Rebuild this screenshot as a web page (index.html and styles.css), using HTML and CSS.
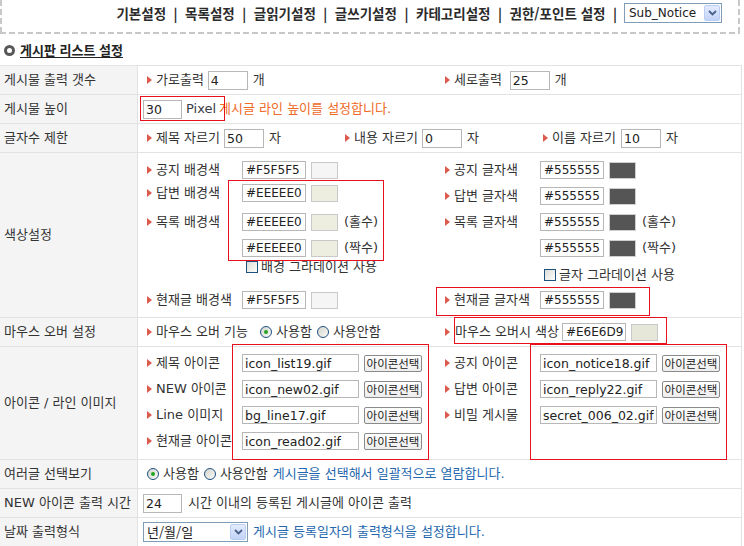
FILE: index.html
```html
<!DOCTYPE html>
<html lang="ko">
<head>
<meta charset="utf-8">
<title>게시판 리스트 설정</title>
<link rel="stylesheet" href="styles.css">
</head>
<body>
<div class="topbar">
  <nav class="menu">
    <span>기본설정</span><span class="sep">|</span><span>목록설정</span><span class="sep">|</span><span>글읽기설정</span><span class="sep">|</span><span>글쓰기설정</span><span class="sep">|</span><span>카테고리설정</span><span class="sep">|</span><span>권한/포인트 설정</span><span class="sep last">|</span>
  </nav>
  <div class="select sel-sub"><span class="sel-text">Sub_Notice</span><span class="sel-btn"><svg width="9" height="6" viewBox="0 0 9 6"><path d="M1 1 L4.5 4.5 L8 1" fill="none" stroke="#4a5f8a" stroke-width="1.8"/></svg></span></div>
</div>

<h2 class="title"><span class="ring"></span><span class="title-text">게시판 리스트 설정</span></h2>

<div class="form">
  <div class="row">
    <div class="th">게시물 출력 갯수</div>
    <div class="td cols2">
      <div class="item"><i class="arr"></i><span>가로출력</span><input class="inp w40 ml4" type="text" value="4"><span class="unit">개</span></div>
      <div class="item"><i class="arr"></i><span>세로출력</span><input class="inp w40 ml8" type="text" value="25"><span class="unit">개</span></div>
    </div>
  </div>

  <div class="row">
    <div class="th">게시물 높이</div>
    <div class="td">
      <input class="inp w39" type="text" value="30"><span class="pixel">Pixel</span><span class="orange">게시글 라인 높이를 설정합니다.</span>
    </div>
  </div>

  <div class="row">
    <div class="th">글자수 제한</div>
    <div class="td cols3">
      <div class="item"><i class="arr"></i><span>제목 자르기</span><input class="inp w40 ml4" type="text" value="50"><span class="unit">자</span></div>
      <div class="item"><i class="arr"></i><span>내용 자르기</span><input class="inp w40 ml4" type="text" value="0"><span class="unit">자</span></div>
      <div class="item"><i class="arr"></i><span>이름 자르기</span><input class="inp w40 ml5" type="text" value="10"><span class="unit">자</span></div>
    </div>
  </div>

  <div class="row row-color">
    <div class="th">색상설정</div>
    <div class="td cols2 top">
      <div class="ccol">
        <div class="cline"><span class="lab"><i class="arr"></i>공지 배경색</span><input class="inp hex" type="text" value="#F5F5F5"><span class="sw sw-f5"></span></div>
        <div class="cline mt5"><span class="lab"><i class="arr"></i>답변 배경색</span><input class="inp hex" type="text" value="#EEEEE0"><span class="sw sw-ee"></span></div>
        <div class="cline mt11"><span class="lab"><i class="arr"></i>목록 배경색</span><input class="inp hex" type="text" value="#EEEEE0"><span class="sw sw-ee"></span><span class="note">(홀수)</span></div>
        <div class="cline mt8"><span class="lab"></span><input class="inp hex" type="text" value="#EEEEE0"><span class="sw sw-ee"></span><span class="note">(짝수)</span></div>
        <div class="cline mt1"><span class="lab"></span><span class="chk"></span><span>배경 그라데이션 사용</span></div>
        <div class="cline mt15"><span class="lab"><i class="arr"></i>현재글 배경색</span><input class="inp hex" type="text" value="#F5F5F5"><span class="sw sw-f5"></span></div>
      </div>
      <div class="ccol">
        <div class="cline"><span class="lab"><i class="arr"></i>공지 글자색</span><input class="inp hex" type="text" value="#555555"><span class="sw sw-55"></span></div>
        <div class="cline mt8"><span class="lab"><i class="arr"></i>답변 글자색</span><input class="inp hex" type="text" value="#555555"><span class="sw sw-55"></span></div>
        <div class="cline mt8"><span class="lab"><i class="arr"></i>목록 글자색</span><input class="inp hex" type="text" value="#555555"><span class="sw sw-55"></span><span class="note">(홀수)</span></div>
        <div class="cline mt8"><span class="lab"></span><input class="inp hex" type="text" value="#555555"><span class="sw sw-55"></span><span class="note">(짝수)</span></div>
        <div class="cline mt9"><span class="lab"></span><span class="chk"></span><span>글자 그라데이션 사용</span></div>
        <div class="cline mt7"><span class="lab"><i class="arr"></i>현재글 글자색</span><input class="inp hex" type="text" value="#555555"><span class="sw sw-55"></span></div>
      </div>
    </div>
  </div>

  <div class="row">
    <div class="th">마우스 오버 설정</div>
    <div class="td cols2">
      <div class="item"><i class="arr"></i><span>마우스 오버 기능</span><span class="radio on ml12"></span><span class="rlabel">사용함</span><span class="radio ml5"></span><span class="rlabel">사용안함</span></div>
      <div class="item"><i class="arr"></i><span class="ml1">마우스 오버시 색상</span><input class="inp hex ml3" type="text" value="#E6E6D9"><span class="sw sw-e6"></span></div>
    </div>
  </div>

  <div class="row row-icon">
    <div class="th">아이콘 / 라인 이미지</div>
    <div class="td cols2 top">
      <div class="icol">
        <div class="iline"><span class="lab"><i class="arr"></i>제목 아이콘</span><input class="inp file" type="text" value="icon_list19.gif"><button class="btn" type="button">아이콘선택</button></div>
        <div class="iline"><span class="lab"><i class="arr"></i>NEW 아이콘</span><input class="inp file" type="text" value="icon_new02.gif"><button class="btn" type="button">아이콘선택</button></div>
        <div class="iline"><span class="lab"><i class="arr"></i>Line 이미지</span><input class="inp file" type="text" value="bg_line17.gif"><button class="btn" type="button">아이콘선택</button></div>
        <div class="iline"><span class="lab"><i class="arr"></i>현재글 아이콘</span><input class="inp file" type="text" value="icon_read02.gif"><button class="btn" type="button">아이콘선택</button></div>
      </div>
      <div class="icol">
        <div class="iline"><span class="lab"><i class="arr"></i>공지 아이콘</span><input class="inp file" type="text" value="icon_notice18.gif"><button class="btn" type="button">아이콘선택</button></div>
        <div class="iline"><span class="lab"><i class="arr"></i>답변 아이콘</span><input class="inp file" type="text" value="icon_reply22.gif"><button class="btn" type="button">아이콘선택</button></div>
        <div class="iline"><span class="lab"><i class="arr"></i>비밀 게시물</span><input class="inp file" type="text" value="secret_006_02.gif"><button class="btn" type="button">아이콘선택</button></div>
      </div>
    </div>
  </div>

  <div class="row">
    <div class="th">여러글 선택보기</div>
    <div class="td">
      <span class="radio on ml4"></span><span class="rlabel">사용함</span><span class="radio ml5"></span><span class="rlabel">사용안함</span><span class="blue ml5">게시글을 선택해서 일괄적으로 열람합니다.</span>
    </div>
  </div>

  <div class="row">
    <div class="th">NEW 아이콘 출력 시간</div>
    <div class="td">
      <input class="inp w39" type="text" value="24"><span class="ml6">시간 이내의 등록된 게시글에 아이콘 출력</span>
    </div>
  </div>

  <div class="row">
    <div class="th">날짜 출력형식</div>
    <div class="td">
      <div class="select sel-date"><span class="sel-text kr">년/월/일</span><span class="sel-btn"><svg width="9" height="6" viewBox="0 0 9 6"><path d="M1 1 L4.5 4.5 L8 1" fill="none" stroke="#4a5f8a" stroke-width="1.8"/></svg></span></div>
      <span class="blue ml5">게시글 등록일자의 출력형식을 설정합니다.</span>
    </div>
  </div>
</div>

<div class="mark mk-height"></div>
<div class="mark mk-bg"></div>
<div class="mark mk-cur"></div>
<div class="mark mk-over"></div>
<div class="mark mk-icon-l"></div>
<div class="mark mk-icon-r"></div>
</body>
</html>
```

FILE: styles.css
```css
* { box-sizing: border-box; }

body {
  margin: 0;
  position: relative;
  background: #fff;
  font-family: "DejaVu Sans", "Noto Sans CJK KR", sans-serif;
  font-size: 13px;
  line-height: 18px;
  color: #333;
}

/* ---------- top menu ---------- */
.topbar {
  width: 740px;
  height: 34px;
  display: flex;
  justify-content: flex-end;
  align-items: center;
  padding: 0 18px 8px 0;
  background:
    repeating-linear-gradient(90deg, #c8c8c8 0 6px, transparent 6px 9px) left bottom / 100% 2px no-repeat,
    repeating-linear-gradient(180deg, #c8c8c8 0 6px, transparent 6px 9px) right top / 2px 100% no-repeat,
    repeating-linear-gradient(180deg, #c8c8c8 0 6px, transparent 6px 9px) left top / 2px 100% no-repeat;
}

.menu {
  display: flex;
  align-items: center;
  font-family: "Noto Sans CJK KR", sans-serif;
  font-weight: bold;
  font-size: 13.5px;
  color: #2b2b2b;
  white-space: pre;
}
.menu .sep { margin: 0 7.5px; color: #2b2b2b; }
.menu .sep.last { margin-right: 7px; }

.select {
  display: flex;
  align-items: center;
  height: 20px;
  border: 1px solid #7f9db9;
  background: #fff;
  padding: 0 1px 0 0;
}
.sel-sub { width: 98px; }
.sel-date { width: 105px; }
.sel-text {
  flex: 1;
  padding-left: 4px;
  font-family: "DejaVu Sans", sans-serif;
  font-size: 12px;
  color: #222;
  white-space: nowrap;
}
.sel-text.kr { font-family: "Noto Sans CJK KR", sans-serif; font-size: 13px; padding-left: 3px; }
.sel-btn {
  width: 16px;
  height: 16px;
  display: flex;
  align-items: center;
  justify-content: center;
  border: 1px solid #bccdf3;
  border-radius: 2px;
  background: linear-gradient(#e3ebfd, #c2d3f8);
}

/* ---------- title ---------- */
.title {
  margin: 7px 0 6px 0;
  padding-left: 4px;
  height: 18px;
  display: flex;
  align-items: center;
  font-size: 13px;
  font-weight: bold;
  line-height: 18px;
  color: #222;
}
.ring {
  width: 11px;
  height: 11px;
  border: 3px solid #585858;
  border-radius: 50%;
  margin-right: 5px;
}
.title-text {
  font-family: "Noto Sans CJK KR", sans-serif;
  text-decoration: underline;
  text-underline-offset: 2px;
}

/* ---------- form grid ---------- */
.form {
  width: 742px;
  border-top: 1px solid #e2e2e2;
  border-right: 1px solid #e2e2e2;
}
.row {
  display: grid;
  grid-template-columns: 138px 1fr;
  height: 29px;
  border-bottom: 1px solid #e2e2e2;
}
.row-color { height: 165px; }
.row-icon { height: 113px; }

.th {
  display: flex;
  align-items: center;
  padding-left: 4px;
  background: #f4f4f4;
  border-right: 1px solid #e2e2e2;
  color: #333;
  white-space: nowrap;
}
.td {
  display: flex;
  align-items: center;
  padding-left: 5px;
  white-space: nowrap;
}
.td.cols2 { display: grid; grid-template-columns: 298px 1fr; align-items: center; }
.td.cols3 { display: grid; grid-template-columns: 198px 198px 1fr; align-items: center; }
.td.top { align-items: start; }

.item { display: flex; align-items: center; }

.arr {
  display: inline-block;
  width: 0;
  height: 0;
  border-left: 5px solid #dc5a4e;
  border-top: 4px solid transparent;
  border-bottom: 4px solid transparent;
  margin: 0 4px 0 4px;
  flex: none;
}

/* ---------- inputs ---------- */
.inp {
  height: 19px;
  margin: 0;
  padding: 0 2px;
  border: 1px solid #b7b7b7;
  background: #fff;
  font-family: "DejaVu Sans", sans-serif;
  font-size: 12.5px;
  color: #222;
  outline: none;
}
.w40 { width: 40px; }
.w39 { width: 39px; }
.hex { width: 64px; height: 18px; padding: 0 1px 0 3px; font-size: 12px; }
.file { width: 117px; height: 18px; }

.unit { margin-left: 5px; }
.pixel { margin-left: 4px; color: #3a3a48; }
.orange { margin-left: 3px; color: #ef6a25; }
.blue { color: #2467ae; }
.note { margin-left: 6px; }

.ml1 { margin-left: 1px; }
.ml3 { margin-left: 3px; }
.ml4 { margin-left: 4px; }
.ml5 { margin-left: 5px; }
.ml6 { margin-left: 6px; }
.ml8 { margin-left: 8px; }
.ml12 { margin-left: 12px; }

/* ---------- colour rows ---------- */
.ccol { display: flex; flex-direction: column; padding-top: 8px; }
.cline { display: flex; align-items: center; height: 18px; }
.mt1 { margin-top: 1px; }
.mt5 { margin-top: 5px; }
.mt7 { margin-top: 7px; }
.mt8 { margin-top: 8px; }
.mt9 { margin-top: 9px; }
.mt11 { margin-top: 11px; }
.mt15 { margin-top: 15px; }

.lab { display: flex; align-items: center; width: 99px; flex: none; }
.sw {
  width: 27px;
  height: 17px;
  margin-left: 5px;
  border: 1px solid #c9c9c9;
}
.sw-f5 { background: #f5f5f5; }
.sw-ee { background: #eeeee0; }
.sw-55 { background: #555555; border-color: #cfcfcf; }
.sw-e6 { background: #e6e6d9; }

.chk {
  width: 12px;
  height: 12px;
  margin: 0 3px 0 4px;
  border: 1px solid #1c5180;
  background: linear-gradient(135deg, #dcdcd7, #fdfdfb);
}

/* ---------- radios ---------- */
.radio {
  position: relative;
  width: 12px;
  height: 12px;
  flex: none;
  border: 1px solid #1c5180;
  border-radius: 50%;
  background: linear-gradient(135deg, #d4d4cc, #fbfbf8);
}
.radio.on::after {
  content: "";
  position: absolute;
  left: 3px;
  top: 3px;
  width: 4px;
  height: 4px;
  border-radius: 50%;
  background: #23a523;
}
.rlabel { margin-left: 4px; }

/* ---------- icon rows ---------- */
.icol { display: flex; flex-direction: column; gap: 8px; padding-top: 7px; }
.iline { display: flex; align-items: center; height: 18px; }
.btn {
  width: 58px;
  height: 17px;
  margin-left: 5px;
  padding: 0;
  border: 1px solid #8a8a8a;
  border-radius: 2px;
  background: linear-gradient(#ffffff, #ededed);
  font-family: "Noto Sans CJK KR", sans-serif;
  font-size: 11.5px;
  line-height: 15px;
  color: #222;
  white-space: nowrap;
}

/* ---------- red annotation boxes ---------- */
.mark {
  position: absolute;
  border: 1px solid #e8101c;
  pointer-events: none;
}
.mk-height { left: 140px; top: 96px; width: 85px; height: 25px; }
.mk-bg { left: 228px; top: 180px; width: 156px; height: 81px; }
.mk-cur { left: 436px; top: 287px; width: 214px; height: 29px; }
.mk-over { left: 454px; top: 317px; width: 213px; height: 27px; }
.mk-icon-l { left: 232px; top: 344px; width: 197px; height: 116px; }
.mk-icon-r { left: 530px; top: 344px; width: 197px; height: 116px; }
```
